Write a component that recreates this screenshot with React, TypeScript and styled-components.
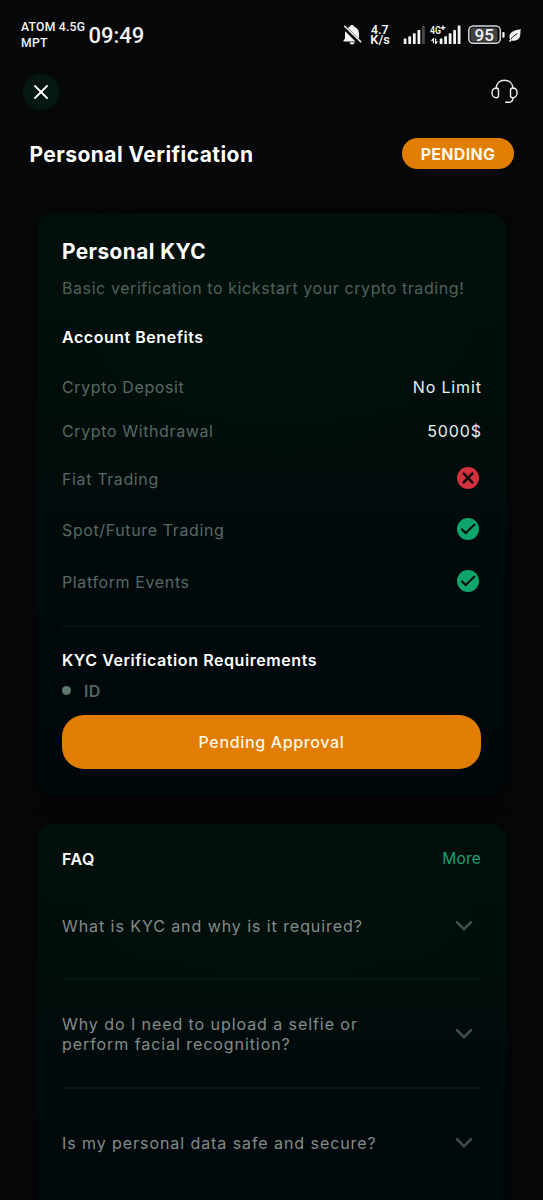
import React from 'react';
import styled, { createGlobalStyle } from 'styled-components';

const Global = createGlobalStyle`
  * { box-sizing: border-box; }
  html, body { margin: 0; padding: 0; background: #060709; }
  body { height: 1200px; overflow: hidden; }
`;

const Screen = styled.main`
  width: 543px;
  height: 1200px;
  overflow: hidden;
  background: #060709;
  color: #fff;
  font-family: Inter, 'Liberation Sans', sans-serif;
  display: flex;
  flex-direction: column;
  > * { flex: none; }
`;

const StatusBar = styled.header`
  height: 70px;
  padding: 0 21px;
  display: flex;
  align-items: center;
  font-family: Roboto, sans-serif;
  font-weight: 500;
  color: #f2f3f3;
`;

const Carrier = styled.div`
  width: 67.5px;
  font-size: 12.2px;
  line-height: 16px;
  letter-spacing: 0.22px;
  white-space: nowrap;
`;

const Clock = styled.div`
  flex: 1;
  padding-top: 1px;
  font-size: 22px;
  line-height: 26px;
`;

const StatusIcons = styled.svg`
  display: block;
  margin-right: -1px;
`;

const Toolbar = styled.nav`
  height: 43px;
  padding: 0 25px 0 23px;
  display: flex;
  align-items: center;
  justify-content: space-between;
`;

const IconButton = styled.button<{ $filled?: boolean }>`
  width: ${(p) => (p.$filled ? 36 : 27)}px;
  height: ${(p) => (p.$filled ? 36 : 35)}px;
  padding: 0;
  border: 0;
  border-radius: 50%;
  background: ${(p) => (p.$filled ? '#061814' : 'transparent')};
  display: grid;
  place-items: center;
  svg { display: block; }
`;

const TitleRow = styled.div`
  height: 100px;
  padding: 25px 29px 0 29.5px;
  display: flex;
  align-items: flex-start;
  justify-content: space-between;
`;

const PageTitle = styled.h1`
  margin: 0;
  font-size: 21px;
  font-weight: 700;
  line-height: 33px;
  letter-spacing: 0.44px;
`;

const Badge = styled.span`
  width: 112px;
  height: 31px;
  border-radius: 16px;
  background: #e17d00;
  color: #fff6e6;
  display: grid;
  place-items: center;
  font-size: 16px;
  font-weight: 700;
  letter-spacing: 0.3px;
`;

const Card = styled.section<{ $height: number; $top: number }>`
  width: 469px;
  height: ${(p) => p.$height}px;
  margin: 0 0 29px 37px;
  padding: ${(p) => p.$top}px 25px 0;
  border-radius: 16px;
  background:
    radial-gradient(ellipse 60% 45% at 52% 8%, rgba(4, 24, 10, 0.3), transparent),
    linear-gradient(180deg, #010f0c 0%, #010d0b 35%, #01090b 65%, #00070b 100%);
  box-shadow: 0 0 18px rgba(1, 1, 2, 0.6);
`;

const CardTitle = styled.h2`
  margin: 0;
  font-size: 20.8px;
  font-weight: 700;
  line-height: 31px;
  height: 30px;
  letter-spacing: 0.45px;
`;

const Description = styled.p`
  margin: 0;
  font-size: 16px;
  line-height: 44px;
  letter-spacing: 0.58px;
  color: #4f625c;
  white-space: nowrap;
`;

const SectionTitle = styled.h3<{ $line: number; $spacing?: number }>`
  margin: 0;
  font-size: 16px;
  font-weight: 600;
  line-height: ${(p) => p.$line}px;
  letter-spacing: ${(p) => p.$spacing ?? 0.53}px;
  white-space: nowrap;
`;

const BenefitRow = styled.div<{ $height: number }>`
  height: ${(p) => p.$height}px;
  display: flex;
  align-items: center;
  justify-content: space-between;
  font-size: 16px;
  letter-spacing: 0.62px;
  svg { display: block; margin: -2px 2px 0 0; }
`;

const Muted = styled.span`
  color: #566963;
`;

const Value = styled.span`
  color: #e9efed;
  letter-spacing: 0.85px;
  margin-right: -0.75px;
`;

const Divider = styled.hr<{ $spaced?: boolean }>`
  margin: ${(p) => (p.$spaced ? '17.5px 0 18px' : '0')};
  border: 0;
  height: 2px;
  background: #061613;
`;

const Requirement = styled.div`
  height: 33px;
  padding-bottom: 1px;
  display: flex;
  align-items: center;
  gap: 13px;
  font-size: 16px;
  font-weight: 600;
  letter-spacing: 0.3px;
  color: #52665f;
`;

const Dot = styled.i`
  width: 9px;
  height: 9px;
  margin-top: -1px;
  border-radius: 50%;
  background: #5d7a70;
`;

const ApprovalButton = styled.button`
  display: block;
  width: 100%;
  height: 54px;
  margin-top: 7px;
  padding: 0;
  border: 0;
  border-radius: 22px;
  background: #e17d00;
  color: #fff6e6;
  font: 500 16px/55px Inter, sans-serif;
  letter-spacing: 0.65px;
`;

const FaqHeader = styled.div`
  height: 30px;
  display: flex;
  align-items: center;
  justify-content: space-between;
`;

const MoreLink = styled.a`
  color: #1f9e72;
  font-size: 15.5px;
  line-height: 28px;
  letter-spacing: 0.2px;
`;

const FaqItem = styled.div<{ $height: number }>`
  height: ${(p) => p.$height}px;
  padding: 2px 8px 0 0;
  display: flex;
  align-items: center;
  justify-content: space-between;
  color: #848b89;
  font-size: 16px;
  line-height: 19.5px;
  letter-spacing: 0.93px;
  white-space: pre-line;
  svg { margin-top: -2px; }
`;

const CheckIcon = () => (
  <svg width="22" height="22" viewBox="0 0 22 22">
    <circle cx="11" cy="11" r="11" fill="#0fa56d" />
    <path d="M4.300 10.700 8.700 15 18 6" fill="none" stroke="#02100c" strokeWidth="2.200" />
  </svg>
);

const CrossIcon = () => (
  <svg width="22" height="22" viewBox="0 0 22 22">
    <circle cx="11" cy="11" r="11" fill="#d4313f" />
    <path d="m6.700 6.700 8.600 8.600m0-8.600-8.600 8.600" stroke="#0b0809" strokeWidth="2.500" strokeLinecap="round" />
  </svg>
);

const Chevron = () => (
  <svg width="18" height="12" viewBox="0 0 18 12">
    <path d="m1.200 1.400 7.800 7.800 7.800-7.800" fill="none" stroke="#3b5149" strokeWidth="2.600" />
  </svg>
);

const PhoneStatus = () => (
  <StatusIcons width="180" height="24" viewBox="343 23 180 24" fill="#f2f3f3">
    <path d="M352 25c-1.200 0-2 .7-2.200 1.700-3 1-4.800 3.500-4.800 6.700v5l-1.500 2.200v1h17v-1L359 38.400v-5c0-3.200-1.800-5.700-4.800-6.700-.2-1-1-1.700-2.200-1.700Z" />
    <path d="M349.600 42.300h5a2.500 2.200 0 0 1-5 0Z" />
    <path d="m343.500 26.500 17 17" stroke="#060709" strokeWidth="4.200" />
    <path d="m344.200 25.700 17 16.500" stroke="#f2f3f3" strokeWidth="1.500" />
    <g fontFamily="Roboto, sans-serif" fontWeight="600">
      <text x="371" y="34" fontSize="12.500" textLength="17.500" lengthAdjust="spacingAndGlyphs">4.7</text>
      <text x="370.300" y="44" fontSize="12.500" textLength="19.500" lengthAdjust="spacingAndGlyphs">K/s</text>
      <text x="430" y="34" fontSize="11.500" textLength="11" lengthAdjust="spacingAndGlyphs">4G</text>
    </g>
    <path d="M443 25.500v4.400m-2.200-2.200h4.400" stroke="#f2f3f3" strokeWidth="1.400" />
    <rect x="403.700" y="38.500" width="2.800" height="5.500" rx=".6" />
    <rect x="408.300" y="36.300" width="2.800" height="7.700" rx=".6" />
    <rect x="412.900" y="33.300" width="2.800" height="10.700" rx=".6" />
    <rect x="417.500" y="30" width="2.800" height="14" rx=".6" />
    <rect x="422" y="26" width="2.800" height="18" rx=".6" fill="#46484a" />
    <path d="m434 38-3.600 2.700H434Zm1 6.200 3.500-2.700H435Z" />
    <path d="M433.400 38v5m2.300-4.500v5.500" stroke="#f2f3f3" strokeWidth="1.200" />
    <rect x="439.700" y="38.500" width="2.800" height="5.500" rx=".6" />
    <rect x="444.200" y="36.300" width="2.800" height="7.700" rx=".6" />
    <rect x="448.700" y="33.300" width="2.800" height="10.700" rx=".6" />
    <rect x="453.200" y="30" width="2.800" height="14" rx=".6" />
    <rect x="457.700" y="25.500" width="2.800" height="18.500" rx=".6" />
    <rect x="468.800" y="26" width="31.500" height="17.300" rx="4.500" fill="#060709" stroke="#d8d9d9" strokeWidth="1.500" />
    <rect x="470.500" y="27.700" width="27" height="14" rx="3" fill="#424345" />
    <text x="474.500" y="40.700" fontSize="16.500" fontWeight="500" fontFamily="Roboto, sans-serif" textLength="19.500" lengthAdjust="spacingAndGlyphs">95</text>
    <rect x="502.300" y="32" width="2.300" height="5.800" rx="1" />
    <path d="M520.700 28.700c-1.500 1-4.500 1.200-7 2.300-3.800 1.600-5.300 5-3.600 8.500l-1.300 1.700 1.200.8 1.500-1.600c4.500 1 8-1.300 8.700-5 .4-2.300 0-4.500.5-6.700Z" />
    <path d="M511 39.300c1.500-2.500 3.500-4.200 6.300-5.600" fill="none" stroke="#060709" strokeWidth="1" />
  </StatusIcons>
);

const benefits: { label: string; value: React.ReactNode; height: number }[] = [
  { label: 'Crypto Deposit', value: <Value>No Limit</Value>, height: 44 },
  { label: 'Crypto Withdrawal', value: <Value>5000$</Value>, height: 44 },
  { label: 'Fiat Trading', value: <CrossIcon />, height: 51.5 },
  { label: 'Spot/Future Trading', value: <CheckIcon />, height: 51.5 },
  { label: 'Platform Events', value: <CheckIcon />, height: 51.5 },
];

export default function App() {
  return (
    <Screen>
      <Global />
      <StatusBar>
        <Carrier>ATOM 4.5G<br />MPT</Carrier>
        <Clock>09:49</Clock>
        <PhoneStatus />
      </StatusBar>
      <Toolbar>
        <IconButton $filled aria-label="Close">
          <svg width="14" height="14" viewBox="0 0 14 14">
            <path d="m1 1 12 12M13 1 1 13" stroke="#fff" strokeWidth="1.800" strokeLinecap="round" />
          </svg>
        </IconButton>
        <IconButton aria-label="Support">
          <svg width="27" height="25" viewBox="0 0 27 25" fill="none" stroke="#eff1f1" strokeWidth="1.400" strokeLinecap="round">
            <path d="M5 9.500C5.300 4.500 8.700 1.200 13.500 1.200S21.700 4.500 22 9.500" />
            <path d="M5.500 9C2.500 9 1 11 1 13.700s1.700 5 4.300 5c1.500 0 2.200-.8 2.200-2.200v-5.300c0-1.400-.7-2.200-2-2.200ZM21.500 9c3 0 4.500 2 4.500 4.700s-1.700 5-4.300 5c-1.500 0-2.200-.8-2.200-2.200v-5.300c0-1.400.7-2.200 2-2.200Z" />
            <path d="M22 18.700c0 3-2 4.600-4.800 4.600h-2.500" />
          </svg>
        </IconButton>
      </Toolbar>
      <TitleRow>
        <PageTitle>Personal Verification</PageTitle>
        <Badge>PENDING</Badge>
      </TitleRow>
      <Card $height={582} $top={23}>
        <CardTitle>Personal KYC</CardTitle>
        <Description>Basic verification to kickstart your crypto trading!</Description>
        <SectionTitle $line={55}>Account Benefits</SectionTitle>
        {benefits.map((b) => (
          <BenefitRow key={b.label} $height={b.height}>
            <Muted>{b.label}</Muted>
            {b.value}
          </BenefitRow>
        ))}
        <Divider $spaced />
        <SectionTitle $line={30} $spacing={0.58}>KYC Verification Requirements</SectionTitle>
        <Requirement><Dot />ID</Requirement>
        <ApprovalButton>Pending Approval</ApprovalButton>
      </Card>
      <Card $height={420} $top={20}>
        <FaqHeader>
          <SectionTitle $line={30}>FAQ</SectionTitle>
          <MoreLink>More</MoreLink>
        </FaqHeader>
        <FaqItem $height={104}>What is KYC and why is it required?<Chevron /></FaqItem>
        <Divider />
        <FaqItem $height={107}>{'Why do I need to upload a selfie or\nperform facial recognition?'}<Chevron /></FaqItem>
        <Divider />
        <FaqItem $height={108}>Is my personal data safe and secure?<Chevron /></FaqItem>
      </Card>
    </Screen>
  );
}
